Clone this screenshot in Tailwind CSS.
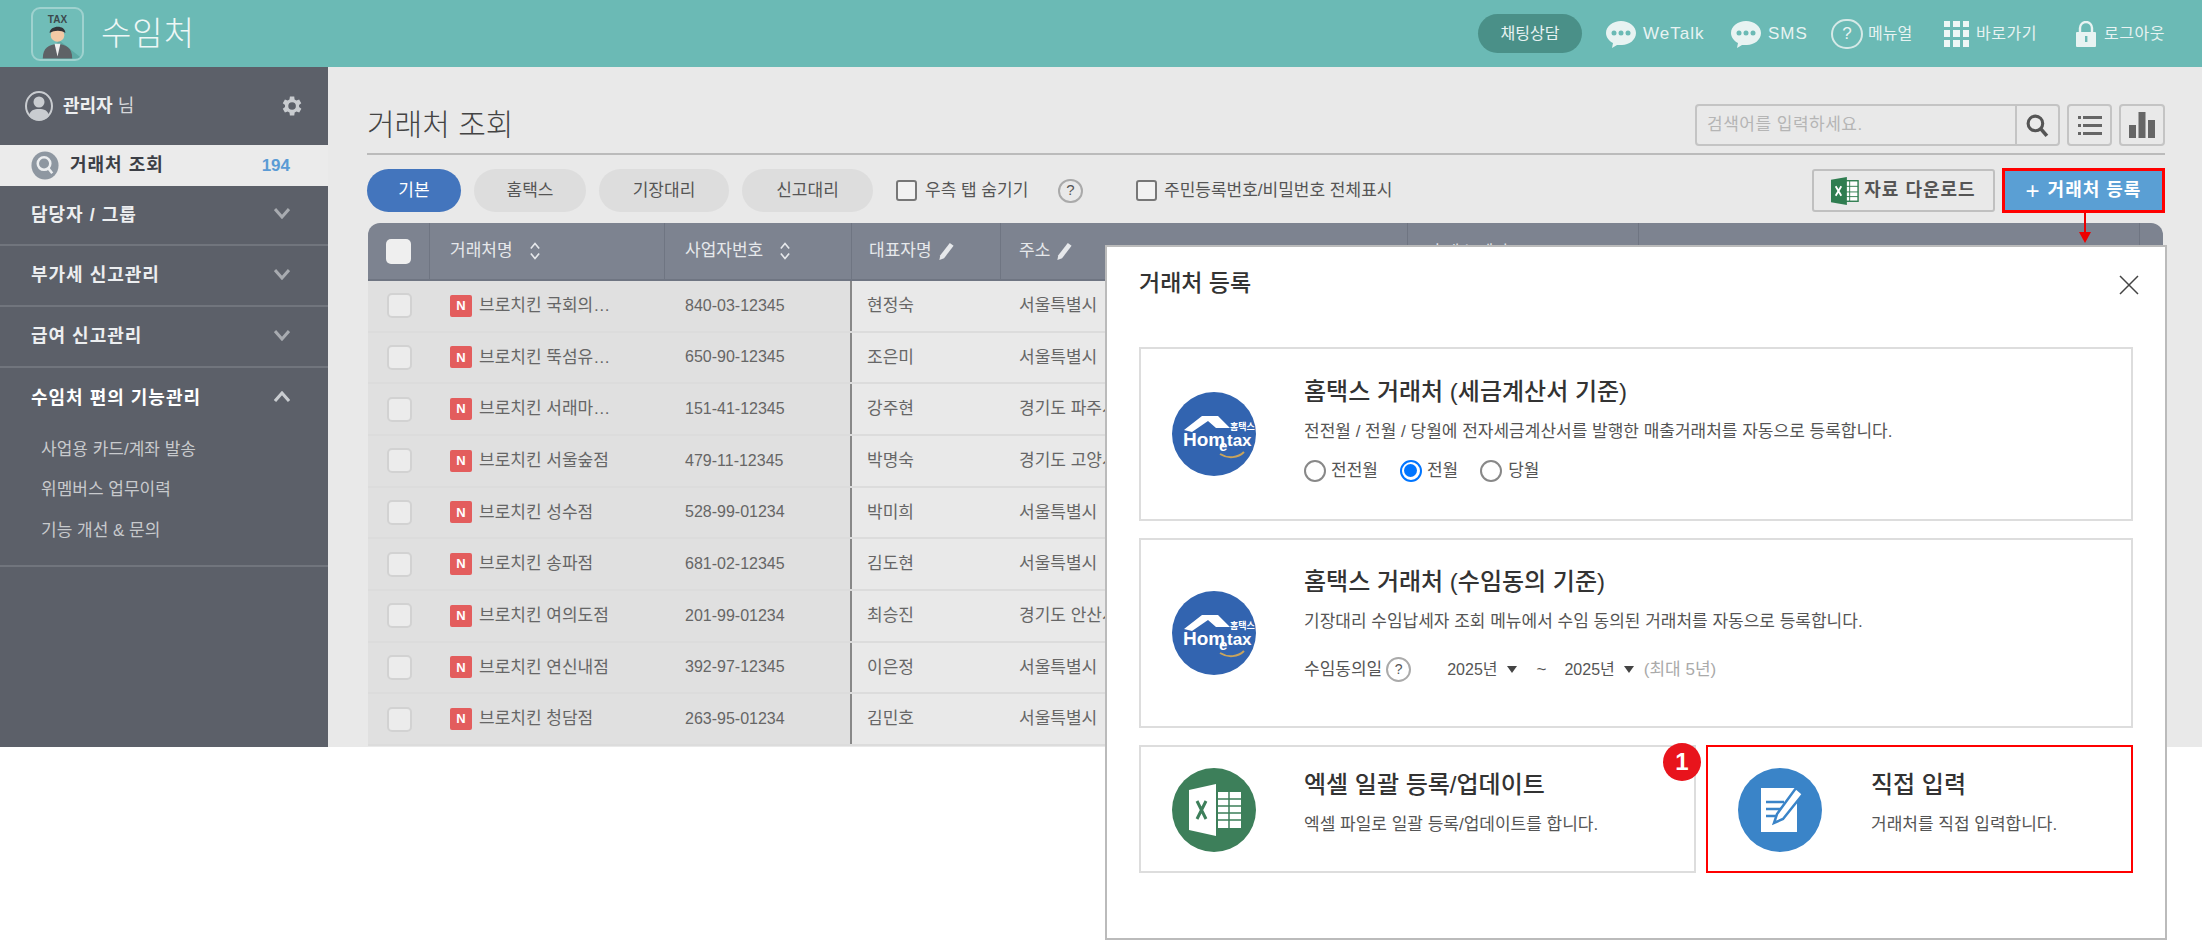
<!DOCTYPE html>
<html lang="ko">
<head>
  <meta charset="UTF-8" />
  <title>수임처 - 거래처 등록</title>
  <script src="https://cdn.jsdelivr.net/npm/@tailwindcss/browser@4"></script>
</head>
<body class="bg-white font-['Liberation_Sans','Noto_Sans_CJK_KR',sans-serif] text-[#555]">
  <div class="relative h-[941px] w-[2202px] overflow-hidden">
    <!-- top bar -->
    <header class="flex h-[67px] items-center justify-between bg-[#6bbab5] pl-[31px] pr-[31px] text-[#e8f3f2]">
      <div class="flex items-center gap-[17px]">
        <div class="relative h-[54px] w-[53px] overflow-hidden rounded-[9px] border-2 border-[#9fd2cf] bg-[#70bdb8]">
          <span class="absolute left-0 top-[3px] w-full text-center text-[10px] font-bold text-[#3c4a4d]">TAX</span>
          <svg viewBox="0 0 50 50" class="absolute left-0 top-0 h-full w-full">
            <path d="M25 30 L50 50 H25z" fill="#5da9a4"/>
            <path d="M10 50 c0-11 6-14 15-15 c9 1 15 4 15 15z" fill="#5e6266"/>
            <path d="M22 35 h6 l-3 13z" fill="#f0f0f0"/>
            <circle cx="25" cy="26" r="7" fill="#f3c9a5"/>
            <path d="M17 24 c0-8 16-9 16 0 c-4-3-11-3-16 0z" fill="#33363a"/>
          </svg>
        </div>
        <span class="text-[33px] font-light leading-none tracking-[1px] text-[#eef7f6]">수임처</span>
      </div>
      <nav class="flex items-center text-[17px]">
        <span class="mr-[24px] flex h-[39px] w-[104px] items-center justify-center rounded-full bg-[#4a9088] text-[16px]">채팅상담</span>
        <svg viewBox="0 0 30 28" class="mr-[7px] h-[28px] w-[30px]"><path d="M15 1c8 0 15 5 15 12s-7 12-14 12c-2 0-4 0-5 0l-5 3 1-5C3 21 0 17 0 13 0 6 7 1 15 1z" fill="#e8f3f2"/><circle cx="8" cy="13" r="2.5" fill="#6bbab5"/><circle cx="15" cy="13" r="2.5" fill="#6bbab5"/><circle cx="22" cy="13" r="2.5" fill="#6bbab5"/></svg>
        <span class="mr-[25px] w-[63px] tracking-[1px]">WeTalk</span>
        <svg viewBox="0 0 30 28" class="mr-[7px] h-[28px] w-[30px]"><path d="M15 1c8 0 15 5 15 12s-7 12-14 12c-2 0-4 0-5 0l-5 3 1-5C3 21 0 17 0 13 0 6 7 1 15 1z" fill="#e8f3f2"/><circle cx="8" cy="13" r="2.5" fill="#6bbab5"/><circle cx="15" cy="13" r="2.5" fill="#6bbab5"/><circle cx="22" cy="13" r="2.5" fill="#6bbab5"/></svg>
        <span class="mr-[25px] w-[38px] tracking-[1px]">SMS</span>
        <span class="mr-[5px] flex h-[30px] w-[32px] items-center justify-center rounded-full border-2 border-[#d5e9e7] text-[17px]">?</span>
        <span class="mr-[26px] w-[50px] whitespace-nowrap text-[16px]">메뉴얼</span>
        <span class="mr-[7px] grid h-[26px] w-[25px] grid-cols-3 gap-[3px]">
          <i class="bg-[#eef7f6]"></i><i class="bg-[#eef7f6]"></i><i class="bg-[#eef7f6]"></i>
          <i class="bg-[#eef7f6]"></i><i class="bg-[#eef7f6]"></i><i class="bg-[#eef7f6]"></i>
          <i class="bg-[#eef7f6]"></i><i class="bg-[#eef7f6]"></i><i class="bg-[#eef7f6]"></i>
        </span>
        <span class="mr-[34px] w-[66px] whitespace-nowrap text-[16px] tracking-[.5px]">바로가기</span>
        <svg viewBox="0 0 20 26" class="mr-[8px] h-[26px] w-[20px]"><path d="M4 11V7a6 6 0 0 1 12 0v4" fill="none" stroke="#e8f3f2" stroke-width="2.4"/><rect x="0" y="11" width="20" height="15" rx="1" fill="#e8f3f2"/><rect x="9" y="15" width="2.4" height="6" fill="#6bbab5"/></svg>
        <span class="w-[67px] whitespace-nowrap text-[16px] tracking-[.5px]">로그아웃</span>
      </nav>
    </header>

    <div class="flex h-[680px] overflow-hidden">
      <!-- sidebar -->
      <aside class="w-[328px] shrink-0 bg-[#5c6069] text-[#eceef0]">
        <div class="flex h-[78px] items-center justify-between pl-[25px] pr-[24px]">
          <div class="flex items-center gap-[10px]">
            <svg viewBox="0 0 28 30" class="h-[30px] w-[28px]"><ellipse cx="14" cy="15" rx="13" ry="14" fill="#5c6069" stroke="#c9ccd0" stroke-width="2"/><circle cx="14" cy="11" r="5.5" fill="#c9ccd0"/><path d="M4 25c1-6 5-7 10-7s9 1 10 7c-3 3-6 4-10 4s-7-1-10-4z" fill="#c9ccd0"/></svg>
            <span class="text-[18px]"><b>관리자</b> <span class="text-[#d5d7da]">님</span></span>
          </div>
          <svg viewBox="0 0 24 24" class="h-[26px] w-[26px]" fill="#c9ccd0"><path d="M19.4 13a7.5 7.5 0 0 0 0-2l2.1-1.6-2-3.4-2.5 1a7.5 7.5 0 0 0-1.7-1L15 3.3h-4l-.4 2.7a7.5 7.5 0 0 0-1.7 1l-2.5-1-2 3.4L6.500 11a7.500 7.500 0 0 0 0 2l-2.100 1.600 2 3.400 2.500-1a7.500 7.500 0 0 0 1.700 1l.4 2.700h4l.4-2.700a7.500 7.500 0 0 0 1.700-1l2.500 1 2-3.400zM13 15.500a3.500 3.500 0 1 1 0-7 3.500 3.500 0 0 1 0 7z"/></svg>
        </div>
        <div class="flex h-[41px] items-center bg-[#ebebeb] pl-[31px] pr-[38px]">
          <svg viewBox="0 0 28 30" class="mr-[11px] h-[29px] w-[28px]"><ellipse cx="14" cy="15" rx="14" ry="14.500" fill="#8e97a1"/><circle cx="13" cy="13" r="6.500" fill="none" stroke="#eceef0" stroke-width="2.600"/><path d="M17.500 18l4 5" stroke="#eceef0" stroke-width="2.600"/></svg>
          <b class="flex-1 text-[18px] tracking-[1px] text-[#3c3f46]">거래처 조회</b>
          <b class="text-[17px] text-[#5b9bd5]">194</b>
        </div>
        <div class="flex h-[60px] items-center justify-between border-b-2 border-[#71757d] pl-[31px] pr-[38px]">
          <b class="text-[18px] tracking-[1px]">담당자 / 그룹</b>
          <svg viewBox="0 0 16 12" class="mb-[4px] h-[12px] w-[16px]"><path d="M1 2l7 8 7-8" fill="none" stroke="#a8abb0" stroke-width="3"/></svg>
        </div>
        <div class="flex h-[61px] items-center justify-between border-b-2 border-[#71757d] pl-[31px] pr-[38px]">
          <b class="text-[18px] tracking-[1px]">부가세 신고관리</b>
          <svg viewBox="0 0 16 12" class="mb-[4px] h-[12px] w-[16px]"><path d="M1 2l7 8 7-8" fill="none" stroke="#a8abb0" stroke-width="3"/></svg>
        </div>
        <div class="flex h-[61px] items-center justify-between border-b-2 border-[#71757d] pl-[31px] pr-[38px]">
          <b class="text-[18px] tracking-[1px]">급여 신고관리</b>
          <svg viewBox="0 0 16 12" class="mb-[4px] h-[12px] w-[16px]"><path d="M1 2l7 8 7-8" fill="none" stroke="#a8abb0" stroke-width="3"/></svg>
        </div>
        <div class="h-[199px] border-b-2 border-[#71757d]">
          <div class="flex h-[61px] items-center justify-between pl-[31px] pr-[38px]">
            <b class="text-[18px] tracking-[1px] text-white">수임처 편의 기능관리</b>
            <svg viewBox="0 0 16 12" class="mb-[4px] h-[12px] w-[16px]"><path d="M1 10l7-8 7 8" fill="none" stroke="#c9ccd0" stroke-width="3"/></svg>
          </div>
          <ul class="pl-[41px] text-[17px] text-[#c8cacd]">
            <li class="flex h-[41px] items-center">사업용 카드/계좌 발송</li>
            <li class="flex h-[40px] items-center">위멤버스 업무이력</li>
            <li class="flex h-[41px] items-center">기능 개선 &amp; 문의</li>
          </ul>
        </div>
      </aside>

      <!-- content -->
      <main class="min-w-0 flex-1 bg-[#e9e9e9] pl-[39px] pr-[37px]">
        <div class="flex h-[88px] items-end justify-between border-b-2 border-[#bbb] pb-[7px]">
          <h1 class="mb-[1px] text-[30px] font-light leading-[40px] text-[#444]">거래처 조회</h1>
          <div class="flex gap-[7px]">
            <div class="flex h-[42px] w-[365px] rounded-[4px] border-2 border-[#c4c4c4]">
              <span class="flex flex-1 items-center pl-[10px] text-[17px] tracking-[.5px] text-[#b5b5b5]">검색어를 입력하세요.</span>
              <span class="flex w-[43px] items-center justify-center border-l-2 border-[#c4c4c4]">
                <svg viewBox="0 0 24 24" class="h-[25px] w-[25px]"><circle cx="10" cy="10" r="7" fill="none" stroke="#555" stroke-width="3"/><path d="M15 15l6 7" stroke="#555" stroke-width="3.500"/></svg>
              </span>
            </div>
            <span class="flex h-[42px] w-[45px] items-center justify-center rounded-[4px] border-2 border-[#c4c4c4]">
              <svg viewBox="0 0 24 20" class="h-[20px] w-[24px]" fill="#666"><rect y="1" width="3" height="3"/><rect x="5" y="1" width="19" height="3"/><rect y="9" width="3" height="3"/><rect x="5" y="9" width="19" height="3"/><rect y="17" width="3" height="3"/><rect x="5" y="17" width="19" height="3"/></svg>
            </span>
            <span class="flex h-[42px] w-[46px] items-center justify-center rounded-[4px] border-2 border-[#c4c4c4]">
              <svg viewBox="0 0 26 26" class="h-[26px] w-[26px]" fill="#666"><rect y="13" width="7" height="13"/><rect x="9.500" y="0" width="7" height="26"/><rect x="19" y="8" width="7" height="18"/></svg>
            </span>
          </div>
        </div>

        <!-- tabs and actions -->
        <div class="flex h-[68px] items-start justify-between pt-[14px]">
          <div class="flex items-center">
            <span class="flex h-[43px] w-[94px] items-center justify-center rounded-full bg-[#4375bd] text-[17px] text-white">기본</span>
            <span class="ml-[13px] flex h-[43px] w-[112px] items-center justify-center rounded-full bg-[#dddddd] text-[17px]">홈택스</span>
            <span class="ml-[13px] flex h-[43px] w-[130px] items-center justify-center rounded-full bg-[#dddddd] text-[17px]">기장대리</span>
            <span class="ml-[13px] flex h-[43px] w-[131px] items-center justify-center rounded-full bg-[#dddddd] text-[17px]">신고대리</span>
            <span class="ml-[23px] h-[21px] w-[21px] rounded-[3px] border-2 border-[#777] bg-white/40"></span>
            <span class="ml-[8px] w-[123px] whitespace-nowrap text-[17px]">우측 탭 숨기기</span>
            <span class="ml-[10px] flex h-[24px] w-[25px] items-center justify-center rounded-full border-2 border-[#aaa] text-[15px]">?</span>
            <span class="ml-[53px] h-[21px] w-[21px] rounded-[3px] border-2 border-[#777] bg-white/40"></span>
            <span class="ml-[7px] whitespace-nowrap text-[17px]">주민등록번호/비밀번호 전체표시</span>
          </div>
          <div class="flex items-start gap-[7px]">
            <span class="flex h-[43px] w-[183px] items-center justify-center gap-[5px] rounded-[3px] border-2 border-[#c0c0c0] text-[18px] font-bold tracking-[1px] text-[#555]">
              <svg viewBox="0 0 30 30" class="h-[28px] w-[28px]"><rect x="12" y="4" width="17" height="22" fill="#fff" stroke="#2f7d50" stroke-width="1.500"/><path d="M12 10h17M12 16h17M12 21h17M20 4v22" stroke="#2f7d50"/><path d="M0 3l17-3v30L0 27z" fill="#2f7d50"/><path d="M5 10l6 10M11 10L5 20" stroke="#fff" stroke-width="2"/></svg>
              자료 다운로드
            </span>
            <span class="-mt-[1px] flex h-[45px] w-[163px] items-center justify-center gap-[7px] border-[3px] border-[#f00] bg-[#5a9fd4] text-[18px] font-bold tracking-[1px] text-white"><span class="text-[24px] font-normal leading-none">+</span>거래처 등록</span>
          </div>
        </div>

        <!-- table -->
        <div class="ml-[1px] mr-[2px] flex h-[58px] overflow-hidden rounded-t-[12px] border-b-2 border-[#6f7582] bg-[#7d8390] text-[17px] text-[#e6e8eb]">
          <div class="flex w-[62px] items-center justify-center border-r border-[#6f7582]"><span class="h-[25px] w-[25px] rounded-[5px] bg-[#efefef]"></span></div>
          <div class="flex w-[235px] items-center border-r border-[#6f7582] pl-[20px]">거래처명
            <svg viewBox="0 0 14 24" class="ml-[15px] h-[20px] w-[14px]"><path d="M2 9l5-6 5 6M2 15l5 6 5-6" fill="none" stroke="#e6e8eb" stroke-width="2"/></svg>
          </div>
          <div class="flex w-[187px] items-center border-r border-[#6f7582] pl-[20px]">사업자번호
            <svg viewBox="0 0 14 24" class="ml-[15px] h-[20px] w-[14px]"><path d="M2 9l5-6 5 6M2 15l5 6 5-6" fill="none" stroke="#e6e8eb" stroke-width="2"/></svg>
          </div>
          <div class="flex w-[149px] items-center border-r border-[#6f7582] pl-[17px]">대표자명
            <svg viewBox="0 0 18 20" class="ml-[5px] h-[19px] w-[18px]" fill="#e6e8eb"><path d="M13 1l4 3-10 13-5 2 1-5z"/></svg>
          </div>
          <div class="flex w-[407px] items-center border-r border-[#6f7582] pl-[18px]">주소
            <svg viewBox="0 0 18 20" class="ml-[5px] h-[19px] w-[18px]" fill="#e6e8eb"><path d="M13 1l4 3-10 13-5 2 1-5z"/></svg>
          </div>
          <div class="flex w-[231px] items-start border-r border-[#6f7582] pl-[22px] pt-[17px] text-[16px]">휴택스 계정</div>
          <div class="w-[501px] border-r border-[#6f7582]"></div>
          <div class="flex-1"></div>
        </div>
        <div id="rows" class="ml-[1px] mr-[2px]"></div>
      </main>
    </div>

    <!-- arrow from the register button down to the dialog -->
    <div class="absolute left-[2084px] top-[213px] h-[22px] w-[2px] bg-[#e00]"></div>
    <div class="absolute left-[2079px] top-[232px] h-0 w-0 border-x-[6px] border-t-[11px] border-x-transparent border-t-[#e00]"></div>

    <!-- dialog -->
    <section class="absolute left-[1105px] top-[245px] h-[695px] w-[1062px] border-2 border-[#bbb] bg-white">
      <div class="flex h-[100px] items-start justify-between pl-[32px] pr-[26px] pt-[19px]">
        <h2 class="text-[23px] font-medium leading-[34px] text-[#333]">거래처 등록</h2>
        <svg viewBox="0 0 20 20" class="mt-[9px] h-[20px] w-[20px]"><path d="M1 1l18 18M19 1L1 19" stroke="#444" stroke-width="1.500"/></svg>
      </div>
      <div class="px-[32px]">
        <!-- card 1 -->
        <div class="flex h-[174px] border-2 border-[#ddd] pl-[31px]">
          <svg viewBox="0 0 84 84" class="mt-[43px] h-[84px] w-[84px] shrink-0">
            <circle cx="42" cy="42" r="42" fill="#3264b0"/>
            <path d="M12 38 L30 24 H46 L58 36 H44 L36 29 L20 40z" fill="#fff"/>
            <text x="11" y="54" font-size="19" font-weight="700" fill="#fff" font-family="Liberation Sans">Hom</text>
            <text x="47" y="59" font-size="15" font-weight="700" fill="#fff" font-family="Liberation Sans">e</text>
            <text x="55" y="54" font-size="17" font-weight="700" fill="#fff" font-family="Liberation Sans">tax</text>
            <text x="58" y="38" font-size="9" font-weight="700" fill="#fff" font-family="Noto Sans CJK KR">홈택스</text>
            <path d="M48 62c8 5 18 4 24-2" fill="none" stroke="#c9a45c" stroke-width="2"/>
          </svg>
          <div class="ml-[48px] pt-[25px]">
            <h3 class="text-[24px] font-medium leading-[36px] text-[#333]">홈택스 거래처 (세금계산서 기준)</h3>
            <p class="mt-[9px] text-[17px] leading-[26px]">전전월 / 전월 / 당월에 전자세금계산서를 발행한 매출거래처를 자동으로 등록합니다.</p>
            <div class="mt-[13px] flex items-center text-[17px]">
              <span class="h-[22px] w-[22px] rounded-full border-2 border-[#888]"></span>
              <span class="ml-[5px]">전전월</span>
              <span class="ml-[22px] flex h-[22px] w-[22px] items-center justify-center rounded-full border-2 border-[#0075ff]"><span class="h-[13px] w-[13px] rounded-full bg-[#0075ff]"></span></span>
              <span class="ml-[5px]">전월</span>
              <span class="ml-[22px] h-[22px] w-[22px] rounded-full border-2 border-[#888]"></span>
              <span class="ml-[6px]">당월</span>
            </div>
          </div>
        </div>
        <!-- card 2 -->
        <div class="mt-[17px] flex h-[190px] border-2 border-[#ddd] pl-[31px]">
          <svg viewBox="0 0 84 84" class="mt-[51px] h-[84px] w-[84px] shrink-0">
            <circle cx="42" cy="42" r="42" fill="#3264b0"/>
            <path d="M12 38 L30 24 H46 L58 36 H44 L36 29 L20 40z" fill="#fff"/>
            <text x="11" y="54" font-size="19" font-weight="700" fill="#fff" font-family="Liberation Sans">Hom</text>
            <text x="47" y="59" font-size="15" font-weight="700" fill="#fff" font-family="Liberation Sans">e</text>
            <text x="55" y="54" font-size="17" font-weight="700" fill="#fff" font-family="Liberation Sans">tax</text>
            <text x="58" y="38" font-size="9" font-weight="700" fill="#fff" font-family="Noto Sans CJK KR">홈택스</text>
            <path d="M48 62c8 5 18 4 24-2" fill="none" stroke="#c9a45c" stroke-width="2"/>
          </svg>
          <div class="ml-[48px] pt-[24px]">
            <h3 class="text-[24px] font-medium leading-[36px] text-[#333]">홈택스 거래처 (수임동의 기준)</h3>
            <p class="mt-[9px] text-[17px] leading-[26px]">기장대리 수임납세자 조회 메뉴에서 수임 동의된 거래처를 자동으로 등록합니다.</p>
            <div class="mt-[22px] flex items-center text-[17px]">
              <span>수임동의일</span>
              <span class="ml-[4px] flex h-[25px] w-[25px] items-center justify-center rounded-full border-2 border-[#aaa] text-[14px]">?</span>
              <span class="ml-[36px] text-[16px]">2025년</span>
              <span class="ml-[9px] h-0 w-0 border-x-[5px] border-t-[7px] border-x-transparent border-t-[#444]"></span>
              <span class="ml-[20px]">~</span>
              <span class="ml-[18px] text-[16px]">2025년</span>
              <span class="ml-[9px] h-0 w-0 border-x-[5px] border-t-[7px] border-x-transparent border-t-[#444]"></span>
              <span class="ml-[10px] text-[#aaa]">(최대 5년)</span>
            </div>
          </div>
        </div>
        <!-- cards 3 and 4 -->
        <div class="mt-[17px] flex gap-[10px]">
          <div class="flex h-[128px] w-[557px] border-2 border-[#ddd] pl-[31px]">
            <svg viewBox="0 0 84 84" class="mt-[21px] h-[84px] w-[84px] shrink-0">
              <circle cx="42" cy="42" r="42" fill="#3d7f5a"/>
              <path d="M17 22 L44 16 V68 L17 62z" fill="#fff"/>
              <path d="M25 33l9 18M34 33l-9 18" stroke="#3d7f5a" stroke-width="3"/>
              <rect x="46" y="24" width="23" height="36" fill="#fff"/>
              <path d="M46 31h23M46 38h23M46 45h23M46 52h23M57 24v36" stroke="#3d7f5a" stroke-width="1.500"/>
            </svg>
            <div class="ml-[48px] pt-[20px]">
              <h3 class="text-[24px] font-medium leading-[36px] text-[#333]">엑셀 일괄 등록/업데이트</h3>
              <p class="mt-[9px] whitespace-nowrap text-[17px] leading-[26px]">엑셀 파일로 일괄 등록/업데이트를 합니다.</p>
            </div>
          </div>
          <div class="flex h-[128px] flex-1 border-2 border-[#f00] pl-[30px]">
            <svg viewBox="0 0 84 84" class="mt-[21px] h-[84px] w-[84px] shrink-0">
              <circle cx="42" cy="42" r="42" fill="#3a84c8"/>
              <rect x="23" y="20" width="36" height="44" fill="#fff"/>
              <path d="M28 34h18M28 41h15M28 48h13" stroke="#3a84c8" stroke-width="2.500"/>
              <path d="M58 20l7 6-20 25-9 4 3-9z" fill="#fff" stroke="#3a84c8" stroke-width="2.500"/>
            </svg>
            <div class="ml-[49px] pt-[20px]">
              <h3 class="text-[24px] font-medium leading-[36px] text-[#333]">직접 입력</h3>
              <p class="mt-[9px] whitespace-nowrap text-[17px] leading-[26px]">거래처를 직접 입력합니다.</p>
            </div>
          </div>
        </div>
      </div>
    </section>
    <span class="absolute left-[1663px] top-[743px] flex h-[38px] w-[38px] items-center justify-center rounded-full bg-[#e8141c] text-[24px] font-bold text-white">1</span>
  </div>

  <script>
    // table rows behind the dialog
    const clients = [
      ["브로치킨 국회의…", "840-03-12345", "현정숙", "서울특별시"],
      ["브로치킨 뚝섬유…", "650-90-12345", "조은미", "서울특별시"],
      ["브로치킨 서래마…", "151-41-12345", "강주현", "경기도 파주시"],
      ["브로치킨 서울숲점", "479-11-12345", "박명숙", "경기도 고양시"],
      ["브로치킨 성수점", "528-99-01234", "박미희", "서울특별시"],
      ["브로치킨 송파점", "681-02-12345", "김도현", "서울특별시"],
      ["브로치킨 여의도점", "201-99-01234", "최승진", "경기도 안산시"],
      ["브로치킨 연신내점", "392-97-12345", "이은정", "서울특별시"],
      ["브로치킨 청담점", "263-95-01234", "김민호", "서울특별시"],
    ];
    document.getElementById("rows").innerHTML = clients.map(([name, bizNo, owner, addr]) => `
      <div class="flex h-[51.67px] border-b-2 border-[#dcdcdc] text-[17px] text-[#666]">
        <div class="flex w-[62px] items-center justify-center bg-[#e0e0e0]"><span class="h-[25px] w-[25px] rounded-[5px] border-2 border-[#d2d2d2] bg-[#ececec]"></span></div>
        <div class="flex w-[235px] items-center bg-[#e0e0e0] pl-[20px]">
          <span class="mr-[7px] flex h-[22px] w-[22px] items-center justify-center rounded-[2px] bg-[#e35d5d] text-[13px] font-bold text-white">N</span>
          <span class="whitespace-nowrap">${name}</span>
        </div>
        <div class="flex w-[187px] items-center border-r-2 border-[#888] bg-[#e0e0e0] pl-[20px] text-[16px]">${bizNo}</div>
        <div class="flex w-[149px] items-center pl-[15px]">${owner}</div>
        <div class="flex flex-1 items-center pl-[18px]">${addr}</div>
      </div>`).join("");
  </script>
</body>
</html>
